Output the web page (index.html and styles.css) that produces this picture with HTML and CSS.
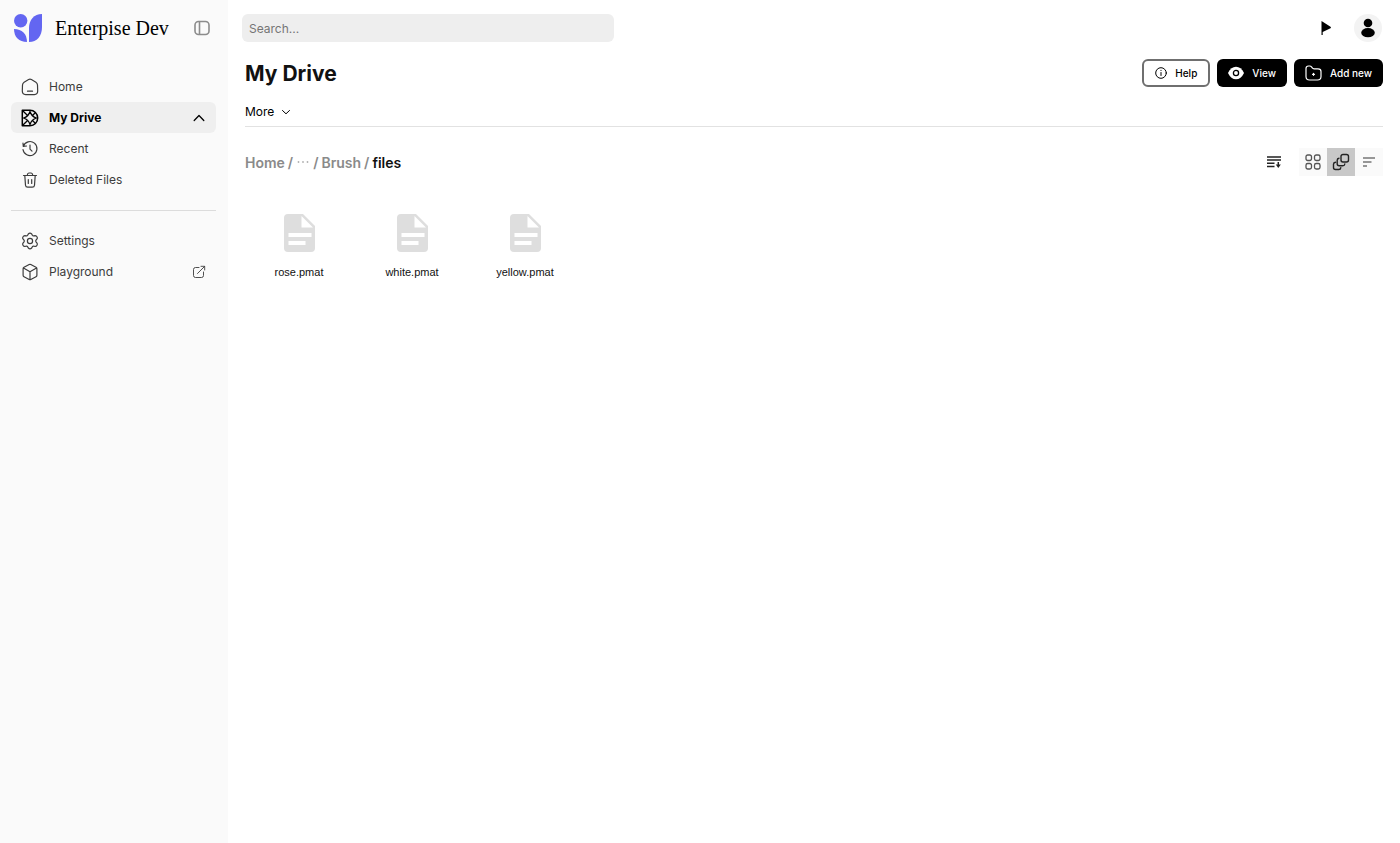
FILE: index.html
```html
<!DOCTYPE html>
<html lang="en">
<head>
  <meta charset="UTF-8">
  <meta name="viewport" content="width=device-width, initial-scale=1">
  <title>My Drive - Enterpise Dev</title>
  <link rel="stylesheet" href="styles.css">
</head>
<body>

  <aside class="sidebar">
    <div class="brand">
      <svg class="brand-logo" width="28" height="28" viewBox="0 0 28 28" fill="#6366f1">
        <circle cx="6.7" cy="6.7" r="6.7"/>
        <path d="M28 0v13c0 9-5 15-13 15V14C15 6 20 0 28 0z"/>
        <path d="M0 15c8 0 13 5 13 13C5 28 0 23 0 15z"/>
      </svg>
      <span class="brand-name">Enterpise Dev</span>
      <button class="icon-button" type="button" aria-label="Toggle sidebar">
        <svg width="16" height="16" viewBox="0 0 16 16" fill="none" stroke="#8c8c8c" stroke-width="1.6">
          <rect x="1" y="1.5" width="14" height="13" rx="3.5"/>
          <path d="M5.5 1.5v13"/>
        </svg>
      </button>
    </div>

    <nav class="menu">
      <a class="menu-item" href="#">
        <svg width="18" height="18" viewBox="0 0 18 18" fill="none" stroke="currentColor" stroke-width="1.2" stroke-linecap="round" stroke-linejoin="round">
          <path d="M7.6 1.6 3.1 4.2Q1.6 5.2 1.5 7L1.3 13q0 3.400 3.400 3.600h8.600q3.400-.2 3.400-3.600L16.500 7q-.1-1.800-1.600-2.800l-4.500-2.600q-1.400-.8-2.800 0zM6.500 13.200h5"/>
        </svg>
        <span>Home</span>
      </a>
      <a class="menu-item active" href="#">
        <svg width="18" height="18" viewBox="0 0 18 18" fill="none" stroke="currentColor" stroke-width="1.5" stroke-linejoin="round">
          <path d="M1.300 1.300H9a7.700 7.700 0 0 1 0 15.400H1.300z"/>
          <path d="M9 2.500Q10.500 7.500 15.500 9 10.500 10.500 9 15.500 7.500 10.500 2.500 9 7.500 7.500 9 2.500z" stroke-width="1.300"/>
          <path d="m1.500 1.500 5.300 5.300M1.500 16.500l5.300-5.300M14.300 3.700l-3.100 3.100M14.300 14.300l-3.100-3.100" stroke-width="1.300"/>
        </svg>
        <span>My Drive</span>
        <svg class="menu-end" width="14" height="14" viewBox="0 0 14 14" fill="none" stroke="currentColor" stroke-width="1.300" stroke-linecap="round" stroke-linejoin="round">
          <path d="m2.200 9.500 4.800-5 4.800 5"/>
        </svg>
      </a>
      <a class="menu-item" href="#">
        <svg width="18" height="18" viewBox="0 0 18 18" fill="none" stroke="currentColor" stroke-width="1.200" stroke-linecap="round" stroke-linejoin="round">
          <path d="M2.300 6.300A7 7 0 1 1 2 9.500M2 3.200l.3 3.200 3.200-.4M9 5v4.200l2 2"/>
        </svg>
        <span>Recent</span>
      </a>
      <a class="menu-item" href="#">
        <svg width="18" height="18" viewBox="0 0 18 18" fill="none" stroke="currentColor" stroke-width="1.200" stroke-linecap="round" stroke-linejoin="round">
          <path d="M2.500 4.500h13M3.800 4.500l.7 9.700q.2 2 2.200 2h4.600q2 0 2.200-2l.7-9.700M6.200 4.300q.3-2.300 1.700-2.300h2.200q1.400 0 1.700 2.300M7.300 8.500v4M10.700 8.500v4"/>
        </svg>
        <span>Deleted Files</span>
      </a>
      <hr class="menu-divider">
      <a class="menu-item" href="#">
        <svg width="18" height="18" viewBox="0 0 18 18" fill="none" stroke="currentColor" stroke-width="1.200" stroke-linejoin="round">
          <path d="M7.300 2q1.700-1.600 3.400 0l.7 1.300q.5.700 1.400.5l1.400-.2q1.200 0 1.800 1.200.6 1.100 0 2.100l-1 1.200q-.5.900 0 1.800l1 1.200q.6 1 0 2.100-.6 1.200-1.800 1.200l-1.400-.2q-.9-.2-1.400.5l-.7 1.300q-1.700 1.600-3.400 0l-.7-1.300q-.5-.7-1.400-.5l-1.400.2q-1.200 0-1.800-1.200-.6-1.100 0-2.100l1-1.200q.5-.9 0-1.800L2 6.900q-.6-1 0-2.100.6-1.200 1.800-1.200l1.400.2q.9.200 1.400-.5z"/>
          <circle cx="9" cy="9" r="2.600"/>
        </svg>
        <span>Settings</span>
      </a>
      <a class="menu-item" href="#">
        <svg width="18" height="18" viewBox="0 0 18 18" fill="none" stroke="currentColor" stroke-width="1.200" stroke-linejoin="round">
          <path d="M8.200 1.500q.8-.4 1.600 0L15 4.300q.9.500.9 1.500v6.400q0 1-.9 1.500l-5.200 2.800q-.8.400-1.600 0L3 13.700q-.9-.5-.9-1.500V5.800q0-1 .9-1.500zM2.500 5 9 8.700 15.500 5M9 8.700v8"/>
        </svg>
        <span>Playground</span>
        <svg class="menu-end" width="14" height="14" viewBox="0 0 14 14" fill="none" stroke="currentColor" stroke-width=".9" stroke-linecap="round" stroke-linejoin="round">
          <path d="M7 2.500H3.500q-2 0-2 2v6q0 2 2 2h6q2 0 2-2V7M5.500 8.500l7-7M9 1.300h3.700V5"/>
        </svg>
      </a>
    </nav>
  </aside>

  <div class="page">
    <header class="topbar">
      <input class="search" type="search" placeholder="Search..." aria-label="Search">
      <div class="topbar-actions">
        <button class="icon-button" type="button" aria-label="Flag">
          <svg width="12" height="16" viewBox="0 0 12 16">
            <path d="M1.500 1l9 5.700q1 .8 0 1.500L2.700 12v3H1.500z"/>
          </svg>
        </button>
        <button class="avatar" type="button" aria-label="Account">
          <svg width="16" height="20" viewBox="0 0 16 20">
            <circle cx="8" cy="5" r="4.300"/>
            <ellipse cx="8" cy="14.700" rx="6.800" ry="4.600"/>
          </svg>
        </button>
      </div>
    </header>

    <main class="content">
      <div class="title-row">
        <h1>My Drive</h1>
        <div class="actions">
          <button class="button outline" type="button">
            <svg width="12" height="12" viewBox="0 0 12 12" fill="none" stroke="currentColor" stroke-linecap="round">
              <circle cx="6" cy="6" r="5.300"/>
              <path d="M6 5.500v3M6 3.300v.2"/>
            </svg>
            Help
          </button>
          <button class="button" type="button">
            <svg width="16" height="14" viewBox="0 0 16 14">
              <path d="M0 7q3-6.300 8-6.300T16 7q-3 6.300-8 6.300T0 7z" fill="#fff"/>
              <circle cx="8" cy="7" r="2.600" fill="none" stroke="#000" stroke-width="1.300"/>
            </svg>
            View
          </button>
          <button class="button" type="button">
            <svg width="17" height="16" viewBox="0 0 17 16" fill="none" stroke="currentColor" stroke-width="1.200" stroke-linecap="round" stroke-linejoin="round">
              <path d="M1 11.500v-8Q1 1 3.500 1h1.300q1 0 1.700.8l1 1.400q.5.600 1.500.6h4Q16 3.800 16 6.500v5q0 3.500-3.500 3.500h-8Q1 15 1 11.500zM7.500 9.300h2M8.500 8.300v2"/>
            </svg>
            Add new
          </button>
        </div>
      </div>

      <div class="tabs">
        <button class="more" type="button">
          More
          <svg width="10" height="10" viewBox="0 0 10 10" fill="none" stroke="currentColor" stroke-linecap="round" stroke-linejoin="round">
            <path d="m1.500 3.500 3.500 3.300 3.500-3.300"/>
          </svg>
        </button>
      </div>

      <div class="toolbar">
        <nav class="breadcrumb" aria-label="Breadcrumb">
          <a href="#">Home</a>
          <span>/</span>
          <button class="crumb-more" type="button" aria-label="Show path">
            <svg width="14" height="4" viewBox="0 0 14 4" fill="#b0b0b0">
              <circle cx="2.500" cy="2" r=".9"/>
              <circle cx="7" cy="2" r=".9"/>
              <circle cx="11.500" cy="2" r=".9"/>
            </svg>
          </button>
          <span>/</span>
          <a href="#">Brush</a>
          <span>/</span>
          <a class="current" href="#">files</a>
        </nav>
        <div class="view-tools">
          <button class="icon-button" type="button" aria-label="Sort">
            <svg width="16" height="14" viewBox="0 0 16 14" fill="none" stroke="#222" stroke-width="1.500">
              <path d="M1 2h14M1 5h14M1 8.300h7.500M1 11.500h7.500M12.300 7v4"/>
              <path d="M9.800 9.500h5l-2.500 3.500z" fill="#222" stroke="none"/>
            </svg>
          </button>
          <div class="view-switch">
            <button type="button" aria-label="Grid view">
              <svg width="16" height="16" viewBox="0 0 16 16" fill="none" stroke="#555" stroke-width="1.300">
                <rect x="1" y="1" width="5.500" height="5.500" rx="1.700"/>
                <rect x="9.500" y="1" width="5.500" height="5.500" rx="1.700"/>
                <rect x="1" y="9.500" width="5.500" height="5.500" rx="1.700"/>
                <rect x="9.500" y="9.500" width="5.500" height="5.500" rx="1.700"/>
              </svg>
            </button>
            <button class="selected" type="button" aria-label="Stack view">
              <svg width="18" height="18" viewBox="0 0 18 18" fill="none" stroke="#222" stroke-width="1.400" stroke-linecap="round">
                <rect x="9" y="1.500" width="7.500" height="7.500" rx="2"/>
                <path d="M7 5.200q-1.800.2-1.800 2v3.600q0 2 2 2h3.600q1.800 0 2-1.800M3.500 9.200q-2 .2-2 2v3.300q0 2 2 2h3.300q1.800 0 2-1.900"/>
              </svg>
            </button>
            <button type="button" aria-label="List view">
              <svg width="14" height="12" viewBox="0 0 14 12" fill="none" stroke="#777" stroke-width="1.300">
                <path d="M1 2h12M1 6h8.500M1 10h4"/>
              </svg>
            </button>
          </div>
        </div>
      </div>

      <div class="files">
        <a class="file" href="#">
          <svg width="31" height="38" viewBox="0 0 31 38">
            <path d="M4 0h15l12 12v22q0 4-4 4H4q-4 0-4-4V4q0-4 4-4z" fill="#dedede"/>
            <path d="M17.500 2v11.500H29zM4.500 19h23v4h-23zM4.500 27h17v4h-17z" fill="#fff"/>
          </svg>
          <span>rose.pmat</span>
        </a>
        <a class="file" href="#">
          <svg width="31" height="38" viewBox="0 0 31 38">
            <path d="M4 0h15l12 12v22q0 4-4 4H4q-4 0-4-4V4q0-4 4-4z" fill="#dedede"/>
            <path d="M17.500 2v11.500H29zM4.500 19h23v4h-23zM4.500 27h17v4h-17z" fill="#fff"/>
          </svg>
          <span>white.pmat</span>
        </a>
        <a class="file" href="#">
          <svg width="31" height="38" viewBox="0 0 31 38">
            <path d="M4 0h15l12 12v22q0 4-4 4H4q-4 0-4-4V4q0-4 4-4z" fill="#dedede"/>
            <path d="M17.500 2v11.500H29zM4.500 19h23v4h-23zM4.500 27h17v4h-17z" fill="#fff"/>
          </svg>
          <span>yellow.pmat</span>
        </a>
      </div>
    </main>
  </div>

</body>
</html>
```
FILE: styles.css
```css
* {
  box-sizing: border-box;
}

body {
  margin: 0;
  min-height: 100vh;
  display: flex;
  background: #fff;
  color: #111;
  font-family: Inter, Arial, sans-serif;
  font-size: 12px;
}

a {
  color: inherit;
  text-decoration: none;
}

button {
  font: inherit;
  color: inherit;
  padding: 0;
  border: none;
  background: none;
  cursor: pointer;
}

svg {
  flex-shrink: 0;
}

/* Sidebar */
.sidebar {
  width: 228px;
  flex-shrink: 0;
  background: #fafafa;
}

.brand {
  display: flex;
  align-items: center;
  height: 56px;
  padding: 0 18px 0 14px;
}

.brand-name {
  margin-left: 13px;
  font-family: "Liberation Serif", "Times New Roman", serif;
  font-size: 20px;
  color: #000;
  white-space: nowrap;
}

.icon-button {
  display: flex;
  align-items: center;
  justify-content: center;
}

.brand .icon-button {
  margin-left: auto;
}

.menu {
  padding: 15px 12px 0 11px;
}

.menu-item {
  display: flex;
  align-items: center;
  gap: 10px;
  height: 31px;
  padding: 0 10px;
  border-radius: 6px;
  color: #3c3c3c;
}

.menu-item.active {
  background: #efefef;
  color: #000;
  font-weight: 700;
}

.menu-end {
  margin-left: auto;
}

.menu-divider {
  height: 1px;
  margin: 15px 0 14px;
  border: none;
  background: #dcdcdc;
}

/* Top bar */
.page {
  flex: 1;
  min-width: 0;
}

.topbar {
  display: flex;
  align-items: center;
  justify-content: space-between;
  height: 56px;
  padding: 0 18px 0 14px;
}

.search {
  width: 372px;
  height: 28px;
  padding: 0 7px;
  border: none;
  border-radius: 6px;
  background: #eee;
  font: inherit;
}

.search::placeholder {
  color: #757575;
}

.topbar-actions {
  display: flex;
  align-items: center;
  gap: 22px;
}

.avatar {
  display: flex;
  align-items: center;
  justify-content: center;
  width: 28px;
  height: 28px;
  border-radius: 50%;
  background: #f3f3f3;
}

/* Content */
.content {
  padding: 3px 17px 0;
}

.title-row {
  display: flex;
  align-items: center;
  justify-content: space-between;
  height: 28px;
}

h1 {
  margin: 0;
  font-size: 21px;
  font-weight: 700;
}

.actions {
  display: flex;
  gap: 7px;
}

.button {
  display: flex;
  align-items: center;
  gap: 8px;
  height: 28px;
  padding: 0 11px;
  border-radius: 6px;
  background: #000;
  color: #fff;
  font-size: 10px;
  font-weight: 500;
}

.button.outline {
  border: 2px solid #6f6f6f;
  background: #fff;
  color: #000;
}

.tabs {
  display: flex;
  align-items: center;
  height: 40px;
  padding-top: 10px;
  border-bottom: 1px solid #e2e2e2;
}

.more {
  display: flex;
  align-items: center;
  gap: 7px;
  color: #000;
}

.toolbar {
  display: flex;
  align-items: center;
  justify-content: space-between;
  margin-top: 21px;
  height: 28px;
}

.breadcrumb {
  display: flex;
  align-items: center;
  gap: 3px;
  color: #8a8a8a;
  font-size: 14px;
  font-weight: 600;
}

.crumb-more {
  display: flex;
}

.breadcrumb .current {
  color: #111;
}

.view-tools {
  display: flex;
  gap: 17px;
}

.view-switch {
  display: flex;
  background: #fafafa;
}

.view-switch button {
  display: flex;
  align-items: center;
  justify-content: center;
  width: 28px;
  height: 28px;
}

.view-switch .selected {
  background: #c8c8c8;
}

/* Files */
.files {
  display: flex;
  flex-wrap: wrap;
  gap: 13px;
  padding: 38px 4px 0;
}

.file {
  display: flex;
  flex-direction: column;
  align-items: center;
  gap: 14px;
  width: 100px;
  font-family: "Liberation Sans", Arial, sans-serif;
  font-size: 11px;
}
```
